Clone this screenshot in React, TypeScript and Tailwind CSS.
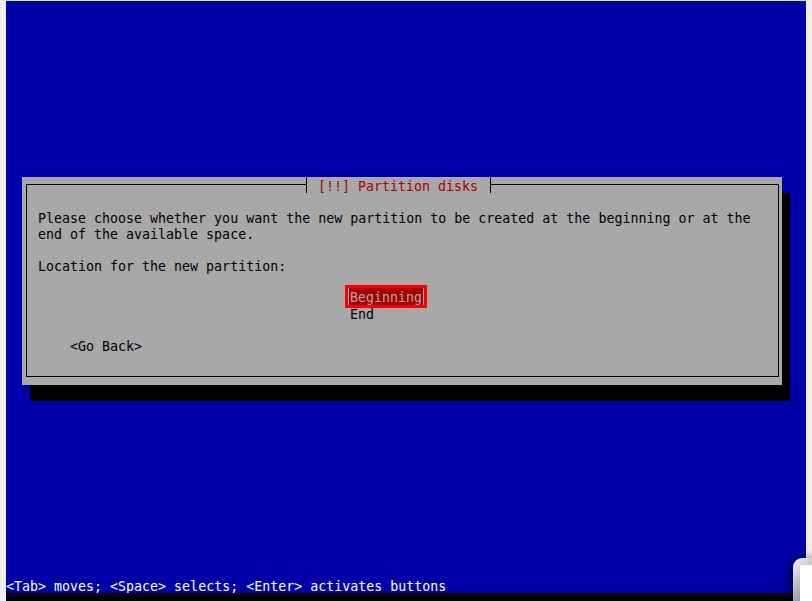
import React from "react";

export default function App() {
  return (
    <div className="relative w-[812px] h-[601px] overflow-hidden bg-[#efefef] pt-px pl-[6px] font-['DejaVu_Sans_Mono',monospace] text-[13.3px] leading-[20px]">
      <div className="flex flex-col w-[800px] h-[600px] bg-[#0000a8]">
        <div className="h-[176px] shrink-0" />
        <div className="relative flex ml-[16px] w-[760px] h-[208px] shrink-0 bg-[#a8a8a8] shadow-[8px_16px_0_0_#000] pt-[7px] pl-[4px] pr-[3px] pb-[8px]">
          <div className="relative flex-1 border border-black">
            <div className="absolute top-[-8px] left-[279px] h-[16px] w-[185px] overflow-visible border-x border-black bg-[#a8a8a8] pl-[11px] text-[#a80000] whitespace-pre">
              [!!] Partition disks
            </div>
            <div className="flex flex-col pt-[24px] pl-[11px] text-black whitespace-pre">
              <div className="h-[16px]">Please choose whether you want the new partition to be created at the beginning or at the</div>
              <div className="h-[16px]">end of the available space.</div>
              <div className="h-[16px]" />
              <div className="h-[16px]">Location for the new partition:</div>
              <div className="h-[16px]" />
              <div className="flex h-[16px]">
                <span className="ml-[310px] -mt-px h-[17px] pt-px bg-[#a80000] border-x border-[#a8a8a8] px-px text-[#a8a8a8] leading-[18px] outline-[3px] outline-solid outline-[#ff0000]">Beginning</span>
              </div>
              <div className="h-[16px] pl-[312px]">End</div>
              <div className="h-[16px]" />
              <div className="h-[16px] pl-[32px]">&lt;Go Back&gt;</div>
            </div>
          </div>
        </div>
        <div className="flex-1" />
        <div className="h-[16px] shrink-0 text-white whitespace-pre">&lt;Tab&gt; moves; &lt;Space&gt; selects; &lt;Enter&gt; activates buttons</div>
        <div className="h-[8px] shrink-0 bg-black" />
      </div>
      <div className="absolute left-[793px] top-[558px] w-[30px] h-[50px] rounded-tl-[9px] bg-[linear-gradient(135deg,#f4f4f8,#9a9aa8_60%,#c8c8d4)] pl-[7px] pt-[7px] shadow-[-5px_0_9px_rgba(0,0,0,0.45)]">
        <div className="w-full h-full bg-white rounded-tl-[2px]" />
      </div>
    </div>
  );
}
